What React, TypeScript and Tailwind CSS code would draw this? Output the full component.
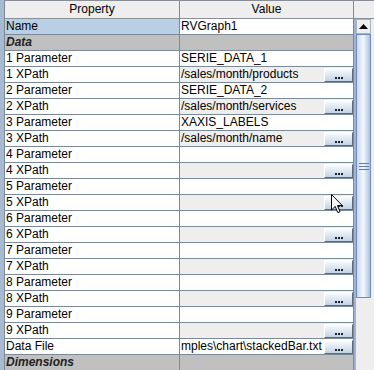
type Row = {
  k: string;
  v?: string;
  cat?: boolean;
  sel?: boolean;
  btn?: boolean;
  grayVal?: boolean;
};

const rows: Row[] = [
  { k: "Name", v: "RVGraph1", sel: true },
  { k: "Data", cat: true },
  { k: "1 Parameter", v: "SERIE_DATA_1" },
  { k: "1 XPath", v: "/sales/month/products", btn: true, grayVal: true },
  { k: "2 Parameter", v: "SERIE_DATA_2" },
  { k: "2 XPath", v: "/sales/month/services", btn: true, grayVal: true },
  { k: "3 Parameter", v: "XAXIS_LABELS" },
  { k: "3 XPath", v: "/sales/month/name", btn: true, grayVal: true },
  { k: "4 Parameter" },
  { k: "4 XPath", btn: true, grayVal: true },
  { k: "5 Parameter" },
  { k: "5 XPath", btn: true, grayVal: true },
  { k: "6 Parameter" },
  { k: "6 XPath", btn: true, grayVal: true },
  { k: "7 Parameter" },
  { k: "7 XPath", btn: true, grayVal: true },
  { k: "8 Parameter" },
  { k: "8 XPath", btn: true, grayVal: true },
  { k: "9 Parameter" },
  { k: "9 XPath", btn: true, grayVal: true },
  { k: "Data File", v: "mples\\chart\\stackedBar.txt", btn: true },
  { k: "Dimensions", cat: true },
];

const DotsButton = () => (
  <div className="w-[29px] h-[14px] mt-[1px] shrink-0 flex items-end justify-center pb-[2px] border border-t-white border-l-white border-r-[#5f6b78] border-b-[#5f6b78] bg-gradient-to-b from-[#f8fbfe] via-[#dfe8f1] to-[#c3d2e2] shadow-[1px_1px_0_#9aa6b2]">
    <div className="flex gap-[1px]">
      <div className="w-[2px] h-[2px] bg-[#1c2330]" />
      <div className="w-[2px] h-[2px] bg-[#1c2330]" />
      <div className="w-[2px] h-[2px] bg-[#1c2330]" />
    </div>
  </div>
);

export default function App() {
  return (
    <div
      className="relative w-[374px] h-[370px] flex overflow-hidden bg-[#eeeeee] text-black text-[12px]"
      style={{ fontFamily: '"Liberation Sans", Arial, sans-serif' }}
    >
      <div className="w-[5px] shrink-0 bg-[#a8b9d2] border-r border-[#7a8a99]" />

      <div className="w-[349px] shrink-0 flex flex-col">
        <div className="flex h-[19px] shrink-0 border-t border-b border-[#8a8f96] bg-[#eeeeee]">
          <div className="w-[175px] border-r border-[#7a8a99] flex items-center justify-center leading-[15px]">
            Property
          </div>
          <div className="w-[174px] border-r border-[#7a8a99] flex items-center justify-center leading-[15px]">
            Value
          </div>
        </div>

        {rows.map((r) => (
          <div key={r.k} className="flex h-[16px] shrink-0 border-b border-[#7a8a99]">
            {r.cat ? (
              <>
                <div className="w-[175px] border-r border-[#7a8a99] bg-[#c0c0c0] pl-[1px] leading-[15px] font-bold italic text-[#222]">
                  {r.k}
                </div>
                <div className="w-[174px] border-r border-[#7a8a99] bg-[#c0c0c0]" />
              </>
            ) : (
              <>
                <div
                  className={`w-[175px] border-r border-[#7a8a99] pl-[1px] leading-[15px] whitespace-nowrap overflow-hidden ${
                    r.sel ? "bg-[#b8cfe5]" : "bg-white"
                  }`}
                >
                  {r.k}
                </div>
                <div
                  className={`w-[174px] border-r border-[#7a8a99] flex leading-[15px] overflow-hidden ${
                    r.grayVal ? "bg-[#eeeeee]" : "bg-white"
                  }`}
                >
                  <div className="flex-1 pl-[1px] whitespace-nowrap overflow-hidden">{r.v}</div>
                  {r.btn && <DotsButton />}
                </div>
              </>
            )}
          </div>
        ))}
      </div>

      <div className="w-[20px] shrink-0 flex flex-col">
        <div className="h-[19px] shrink-0 border-t border-b border-[#8a8f96] bg-[#eeeeee]" />
        <div className="flex-1 flex flex-col border-l-2 border-[#9fb3d3] pr-[3px] bg-[#eeeeee]">
          <div className="h-[15px] shrink-0 flex items-center justify-center bg-[#eeeeee] border border-[#a8b4c2]">
            <svg width="9" height="5" viewBox="0 0 9 5">
              <path d="M4.5 0 L9 5 L0 5 Z" fill="#000" />
            </svg>
          </div>
          <div className="h-[264px] shrink-0 flex items-center justify-center border border-[#6f8bbf] bg-gradient-to-r from-[#c9d9ee] via-[#f4f8fc] to-[#a9c1df]">
            <div className="flex flex-col gap-[2px] w-[10px]">
              <div className="h-[1px] bg-[#5d7fb8]" />
              <div className="h-[1px] bg-[#5d7fb8]" />
              <div className="h-[1px] bg-[#5d7fb8]" />
            </div>
          </div>
          <div className="flex-1" />
        </div>
      </div>

      <svg
        className="absolute left-[331px] top-[194px]"
        width="13"
        height="21"
        viewBox="0 0 13 21"
      >
        <path
          d="M0.5 0.5 L0.5 16 L4.2 12.4 L6.8 18.6 L9 17.7 L6.5 11.6 L11.3 11.6 Z"
          fill="#fff"
          stroke="#000"
          strokeWidth="1"
          strokeLinejoin="miter"
        />
      </svg>
    </div>
  );
}
